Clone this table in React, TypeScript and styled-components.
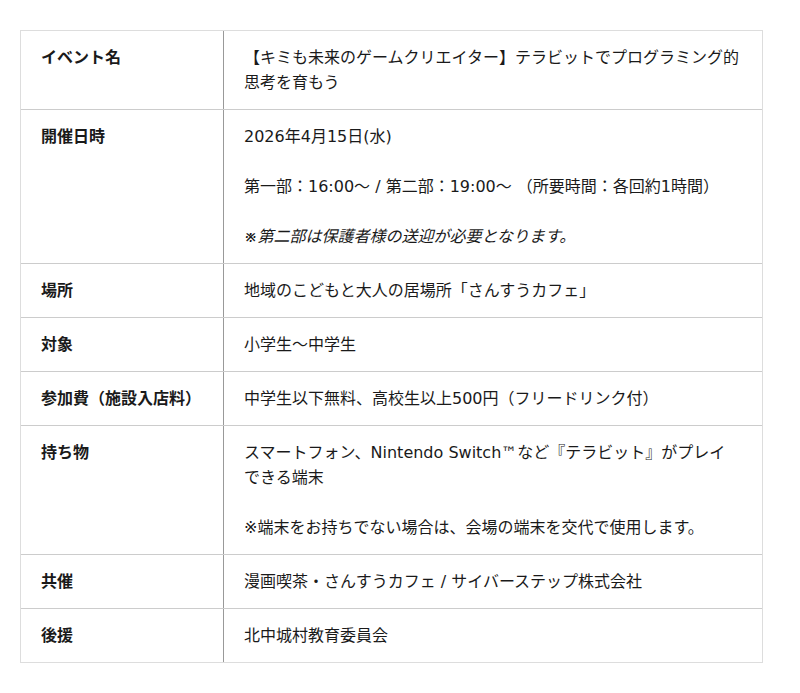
import React from "react"
import styled, { createGlobalStyle } from "styled-components"

const GlobalStyle = createGlobalStyle`
  body {
    margin: 0;
    background: #fff;
    font-family: "DejaVu Sans", "Noto Sans CJK JP", sans-serif;
    color: #1a1a1a;
  }
`

const Wrapper = styled.div`
  padding: 30px 20px 30px 20px;
`

const Table = styled.div`
  width: 741px;
  border: 1px solid #ddd;
`

const Row = styled.div`
  display: grid;
  grid-template-columns: 203px 1fr;
  border-bottom: 1px solid #ccc;

  &:last-child {
    border-bottom: none;
  }
`

const Key = styled.div`
  padding: 14px 20px;
  border-right: 1px solid #999;
  font-size: 16px;
  line-height: 25px;
  font-weight: bold;
`

const Value = styled.div`
  padding: 14px 20px;
  font-size: 16px;
  line-height: 25px;
`

const Para = styled.p<{ $italic?: boolean }>`
  margin: 0;
  font-style: ${p => (p.$italic ? "italic" : "normal")};

  & + & {
    margin-top: 25px;
  }
`

const rows: { label: string; body: React.ReactNode }[] = [
  {
    label: "イベント名",
    body: "【キミも未来のゲームクリエイター】テラビットでプログラミング的思考を育もう"
  },
  {
    label: "開催日時",
    body: (
      <>
        <Para>2026年4月15日(水)</Para>
        <Para>第一部：16:00～ / 第二部：19:00～ （所要時間：各回約1時間）</Para>
        <Para $italic>※第二部は保護者様の送迎が必要となります。</Para>
      </>
    )
  },
  { label: "場所", body: "地域のこどもと大人の居場所「さんすうカフェ」" },
  { label: "対象", body: "小学生～中学生" },
  { label: "参加費（施設入店料）", body: "中学生以下無料、高校生以上500円（フリードリンク付）" },
  {
    label: "持ち物",
    body: (
      <>
        <Para>
          スマートフォン、Nintendo Switch™など『テラビット』がプレイ
          <br />
          できる端末
        </Para>
        <Para>※端末をお持ちでない場合は、会場の端末を交代で使用します。</Para>
      </>
    )
  },
  { label: "共催", body: "漫画喫茶・さんすうカフェ / サイバーステップ株式会社" },
  { label: "後援", body: "北中城村教育委員会" }
]

export default function App() {
  return (
    <Wrapper>
      <GlobalStyle />
      <Table>
        {rows.map(r => (
          <Row key={r.label}>
            <Key>{r.label}</Key>
            <Value>{r.body}</Value>
          </Row>
        ))}
      </Table>
    </Wrapper>
  )
}
